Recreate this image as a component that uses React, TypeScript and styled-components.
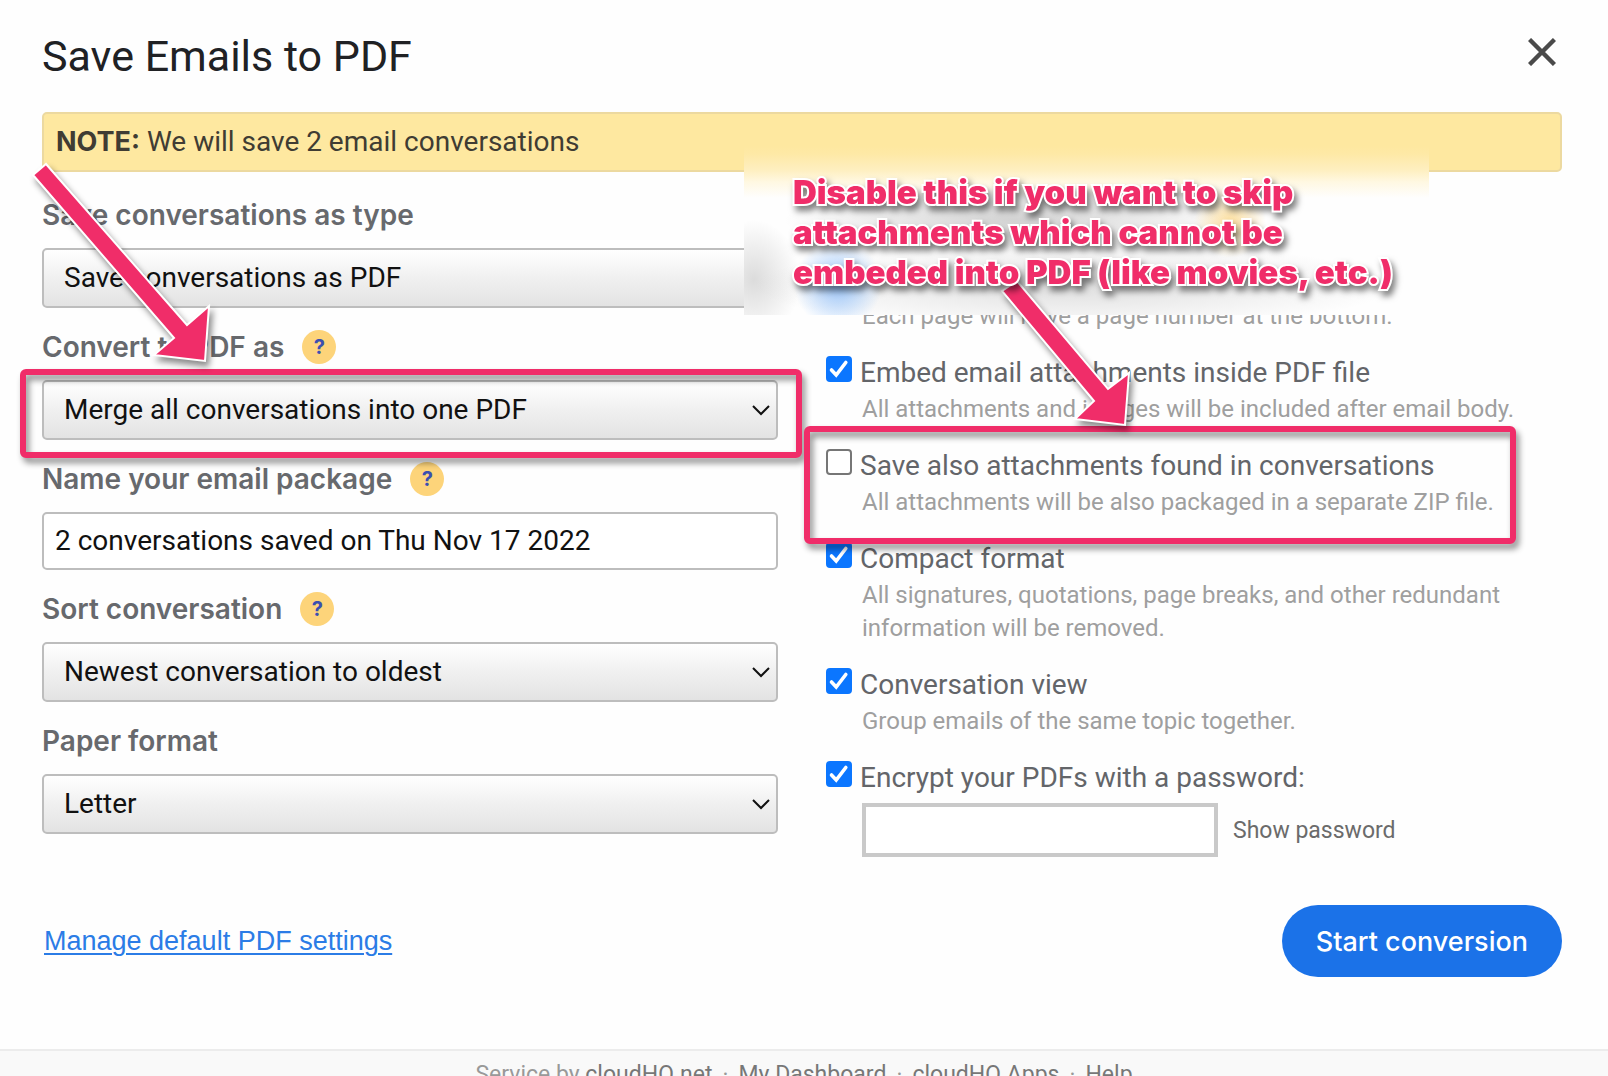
import React, { useState } from "react";
import styled, { createGlobalStyle, css } from "styled-components";

const PINK = "#f02d69";
const BODY_FONT = `Roboto, "Liberation Sans", sans-serif`;
const LABEL_FONT = `Inter, Roboto, sans-serif`;

const GlobalStyle = createGlobalStyle`
  *, *::before, *::after { box-sizing: border-box; }
  body { margin: 0; background: #fff; font-family: ${BODY_FONT}; }
`;

const Dialog = styled.main`
  height: 100vh;
  overflow: hidden;
  display: flex;
  flex-direction: column;
  background: #fefefe;
  color: #5f6368;
  font-size: 28px;
`;

const Content = styled.form`
  display: flex;
  flex-direction: column;
  padding: 30px 46px 72px 42px;
`;

const Header = styled.header`
  display: flex;
  justify-content: space-between;
  align-items: flex-start;
  padding-right: 6px;
  margin-bottom: 30px;
`;

const Title = styled.h1`
  margin: 0;
  font-size: 43px;
  line-height: 52px;
  font-weight: 400;
  color: #202124;
`;

const CloseButton = styled.button`
  display: flex;
  align-items: center;
  height: 44px;
  padding: 0;
  border: 0;
  background: none;
  cursor: pointer;
`;

const Note = styled.p`
  margin: 0 0 4px;
  padding: 0 12px;
  height: 60px;
  line-height: 56px;
  border: 2px solid #ecd9a0;
  border-radius: 5px;
  background: #fee8a0;
  color: #403c33;
`;

const NoteTag = styled.strong`
  font-family: ${LABEL_FONT};
  font-size: 27px;
  font-weight: 700;
`;

const Columns = styled.div`
  display: grid;
  grid-template-columns: minmax(0, 1fr) minmax(0, 1fr);
  gap: 48px;
`;

const Column = styled.div<{ $offset?: number }>`
  position: relative;
  padding-top: ${(p) => p.$offset ?? 0}px;
`;

const FieldHead = styled.div`
  display: flex;
  align-items: center;
  gap: 18px;
  height: 72px;
  padding-top: 6px;
`;

const FieldLabel = styled.label`
  font-family: ${LABEL_FONT};
  font-size: 28px;
  font-weight: 600;
  color: #67696d;
`;

const HelpButton = styled.button`
  width: 34px;
  height: 34px;
  padding: 0;
  border: 0;
  border-radius: 50%;
  background: #fdd47a;
  color: #3b4fb0;
  font-family: ${LABEL_FONT};
  font-size: 20px;
  font-weight: 700;
  line-height: 34px;
  cursor: pointer;
`;

const Control = styled.div`
  position: relative;
`;

const controlBox = css`
  display: block;
  width: 100%;
  margin: 0;
  border: 2px solid #bdbdbd;
  border-radius: 5px;
  font-family: ${BODY_FONT};
  font-size: 28px;
  color: #111;
  outline: none;
`;

const Select = styled.select`
  ${controlBox}
  appearance: none;
  height: 60px;
  padding: 0 40px 2px 20px;
  background: linear-gradient(#ffffff, #f0f0f0 50%, #e3e3e3);
`;

const TextInput = styled.input`
  ${controlBox}
  height: 58px;
  padding: 0 11px 2px;
  background: #fff;
`;

const Chevron = styled.svg`
  position: absolute;
  right: 7px;
  top: 24px;
  pointer-events: none;
`;

const HighlightBox = styled.div<{ $inset: string }>`
  position: absolute;
  inset: ${(p) => p.$inset};
  z-index: 3;
  border: 6px solid ${PINK};
  border-radius: 6px;
  filter: drop-shadow(3px 5px 3px rgba(0, 0, 0, 0.45));
  pointer-events: none;
`;

const ArrowSvg = styled.svg<{ $x: number; $y: number }>`
  position: absolute;
  left: ${(p) => p.$x}px;
  top: ${(p) => p.$y}px;
  z-index: 4;
  overflow: visible;
  filter: drop-shadow(3px 5px 3px rgba(0, 0, 0, 0.45));
  pointer-events: none;
`;

const CalloutPatch = styled.div`
  position: absolute;
  left: -82px;
  top: -30px;
  width: 685px;
  height: 169px;
  z-index: 2;
  background:
    radial-gradient(44px 44px at 94px 138px, rgba(120, 178, 250, 0.75), rgba(120, 178, 250, 0) 100%),
    radial-gradient(36px 36px at 486px 76px, rgba(253, 212, 122, 0.7), rgba(253, 212, 122, 0) 100%),
    radial-gradient(46px 60px at 10px 134px, rgba(130, 130, 130, 0.28), rgba(130, 130, 130, 0) 100%),
    radial-gradient(230px 34px at 270px 74px, rgba(110, 110, 110, 0.3), rgba(110, 110, 110, 0) 100%),
    radial-gradient(320px 44px at 330px 140px, rgba(110, 110, 110, 0.22), rgba(110, 110, 110, 0) 100%),
    linear-gradient(#fee8a0, #fee9a6 8px, #feefc0 24px, #fff8e2 36px, #fefefe 52px);
  pointer-events: none;
`;

const Callout = styled.p`
  position: absolute;
  left: -33px;
  top: -4px;
  z-index: 5;
  margin: 0;
  font-family: ${LABEL_FONT};
  font-size: 33px;
  font-weight: 900;
  line-height: 40px;
  white-space: nowrap;
  color: ${PINK};
  -webkit-text-stroke: 4px #fff;
  paint-order: stroke fill;
  filter: drop-shadow(3px 5px 3px rgba(0, 0, 0, 0.5));
  pointer-events: none;
`;

const Option = styled.div`
  position: relative;
  margin-bottom: 20px;
`;

const OptionRow = styled.div`
  display: flex;
  align-items: flex-start;
  gap: 8px;
  height: 36px;
`;

const CheckWrap = styled.span`
  position: relative;
  display: flex;
  margin-top: 3px;
`;

const CheckInput = styled.input`
  appearance: none;
  width: 26px;
  height: 26px;
  margin: 0;
  border: 2px solid #767676;
  border-radius: 4px;
  background: #fff;

  &:checked {
    border-color: #0b76ff;
    background: #0b76ff;
  }
`;

const CheckMark = styled.svg`
  position: absolute;
  inset: 0;
  pointer-events: none;
`;

const OptionLabel = styled.label`
  padding-top: 2px;
  line-height: 36px;
  color: #636569;
`;

const OptionHint = styled.p`
  margin: 4px 0 0;
  padding-left: 36px;
  font-size: 24px;
  line-height: 33px;
  color: #9f9f9f;
`;

const PasswordRow = styled.div`
  display: flex;
  align-items: center;
  gap: 15px;
  margin-top: 9px;
  padding-left: 36px;
`;

const PasswordInput = styled.input`
  width: 356px;
  height: 54px;
  padding: 0 8px;
  border: 4px solid #c9c9c9;
  background: #fff;
  font-size: 24px;
  outline: none;
`;

const TextButton = styled.button`
  padding: 0;
  border: 0;
  background: none;
  font-family: ${BODY_FONT};
  font-size: 23px;
  color: #6b6b6b;
  cursor: pointer;
`;

const Actions = styled.div`
  display: flex;
  justify-content: space-between;
  align-items: center;
  margin-top: 28px;
  padding-left: 2px;
`;

const SettingsLink = styled.a`
  font-family: "Liberation Sans", Arial, sans-serif;
  font-size: 27px;
  color: #2b7ce6;
  text-underline-offset: 3px;
  text-decoration-thickness: 2px;
`;

const StartButton = styled.button`
  height: 72px;
  padding: 0 34px;
  border: 0;
  border-radius: 36px;
  background: #1b72e8;
  color: #fff;
  font-family: ${LABEL_FONT};
  font-size: 27px;
  font-weight: 500;
  cursor: pointer;
`;

const Footer = styled.footer`
  flex: none;
  display: flex;
  justify-content: center;
  gap: 10px;
  padding: 10px 0 24px;
  border-top: 2px solid #ececec;
  background: #f9f9f9;
  font-size: 23px;
  line-height: 28px;
  color: #999;
`;

const FooterLink = styled.a`
  color: #777;
  text-decoration: none;
`;

function Help({ topic }: { topic: string }) {
  return (
    <HelpButton type="button" aria-label={`Help: ${topic}`}>
      ?
    </HelpButton>
  );
}

type SelectFieldProps = {
  id: string;
  label: string;
  value: string;
  help?: boolean;
  highlighted?: boolean;
};

function SelectField({ id, label, value, help, highlighted }: SelectFieldProps) {
  return (
    <div>
      <FieldHead>
        <FieldLabel htmlFor={id}>{label}</FieldLabel>
        {help && <Help topic={label} />}
      </FieldHead>
      <Control>
        <Select id={id} defaultValue={value}>
          <option>{value}</option>
        </Select>
        <Chevron width="20" height="12" viewBox="0 0 20 12" fill="none" stroke="#111" strokeWidth="2">
          <path d="M2 2 L10 10 L18 2" />
        </Chevron>
        {highlighted && <HighlightBox $inset="-11px -24px -18px -22px" />}
      </Control>
    </div>
  );
}

function Checkbox({ id, checked }: { id: string; checked: boolean }) {
  const [on, setOn] = useState(checked);
  return (
    <CheckWrap>
      <CheckInput type="checkbox" id={id} checked={on} onChange={() => setOn(!on)} />
      {on && (
        <CheckMark width="26" height="26" viewBox="0 0 26 26" fill="none" stroke="#fff" strokeWidth="3.6" strokeLinecap="round">
          <path d="M5.5 14 L10.2 19 L19.8 6.5" />
        </CheckMark>
      )}
    </CheckWrap>
  );
}

function OptionItem(props: {
  id: string;
  label: string;
  hint?: string;
  checked?: boolean;
  children?: React.ReactNode;
}) {
  return (
    <Option>
      <OptionRow>
        <Checkbox id={props.id} checked={!!props.checked} />
        <OptionLabel htmlFor={props.id}>{props.label}</OptionLabel>
      </OptionRow>
      {props.hint && <OptionHint>{props.hint}</OptionHint>}
      {props.children}
    </Option>
  );
}

function Arrow({ x, y, points }: { x: number; y: number; points: string }) {
  return (
    <ArrowSvg $x={x} $y={y} width="190" height="212" aria-hidden="true">
      <polygon points={points} fill={PINK} stroke="#fff" strokeWidth="2" />
    </ArrowSvg>
  );
}

export default function App() {
  const [visible, setVisible] = useState(false);
  return (
    <Dialog>
      <GlobalStyle />
      <Content onSubmit={(e) => e.preventDefault()}>
        <Header>
          <Title>Save Emails to PDF</Title>
          <CloseButton type="button" aria-label="Close">
            <svg width="28" height="28" viewBox="0 0 28 28" stroke="#4a4a4a" strokeWidth="4.4">
              <path d="M1.5 1.5 L26.5 26.5 M26.5 1.5 L1.5 26.5" />
            </svg>
          </CloseButton>
        </Header>

        <Note>
          <NoteTag>NOTE:</NoteTag> We will save 2 email conversations
        </Note>

        <Columns>
          <Column>
            <SelectField id="type" label="Save conversations as type" value="Save conversations as PDF" />
            <SelectField id="merge" label="Convert to PDF as" value="Merge all conversations into one PDF" help highlighted />
            <div>
              <FieldHead>
                <FieldLabel htmlFor="name">Name your email package</FieldLabel>
                <Help topic="Name your email package" />
              </FieldHead>
              <TextInput id="name" type="text" defaultValue="2 conversations saved on Thu Nov 17 2022" />
            </div>
            <SelectField id="sort" label="Sort conversation" value="Newest conversation to oldest" help />
            <SelectField id="paper" label="Paper format" value="Letter" />
            <Arrow x={-22} y={-26} points="13,25 26,14 167,175 189,156 185,211 134,205 154,188" />
          </Column>

          <Column $offset={120}>
            <Option>
              <OptionHint>Each page will have a page number at the bottom.</OptionHint>
            </Option>
            <OptionItem
              id="embed"
              checked
              label="Embed email attachments inside PDF file"
              hint="All attachments and images will be included after email body."
            />
            <OptionItem
              id="attachments"
              label="Save also attachments found in conversations"
              hint="All attachments will be also packaged in a separate ZIP file."
            >
              <HighlightBox $inset="-20px 46px -25px -22px" />
            </OptionItem>
            <OptionItem
              id="compact"
              checked
              label="Compact format"
              hint="All signatures, quotations, page breaks, and other redundant information will be removed."
            />
            <OptionItem id="view" checked label="Conversation view" hint="Group emails of the same topic together." />
            <OptionItem id="encrypt" checked label="Encrypt your PDFs with a password:">
              <PasswordRow>
                <PasswordInput type={visible ? "text" : "password"} aria-label="Password" />
                <TextButton type="button" onClick={() => setVisible(!visible)}>
                  Show password
                </TextButton>
              </PasswordRow>
            </OptionItem>
            <CalloutPatch />
            <Arrow x={164} y={96} points="12,19 27,9 118,117 139,101 135,153 85,147 104,129" />
            <Callout>
              Disable this if you want to skip
              <br />
              attachments which cannot be
              <br />
              embeded into PDF (like movies, etc.)
            </Callout>
          </Column>
        </Columns>

        <Actions>
          <SettingsLink href="#settings">Manage default PDF settings</SettingsLink>
          <StartButton type="submit">Start conversion</StartButton>
        </Actions>
      </Content>

      <Footer>
        <span>
          Service by <FooterLink href="#home">cloudHQ.net</FooterLink>
        </span>
        <span>·</span>
        <FooterLink href="#dashboard">My Dashboard</FooterLink>
        <span>·</span>
        <FooterLink href="#apps">cloudHQ Apps</FooterLink>
        <span>·</span>
        <FooterLink href="#help">Help</FooterLink>
      </Footer>
    </Dialog>
  );
}
